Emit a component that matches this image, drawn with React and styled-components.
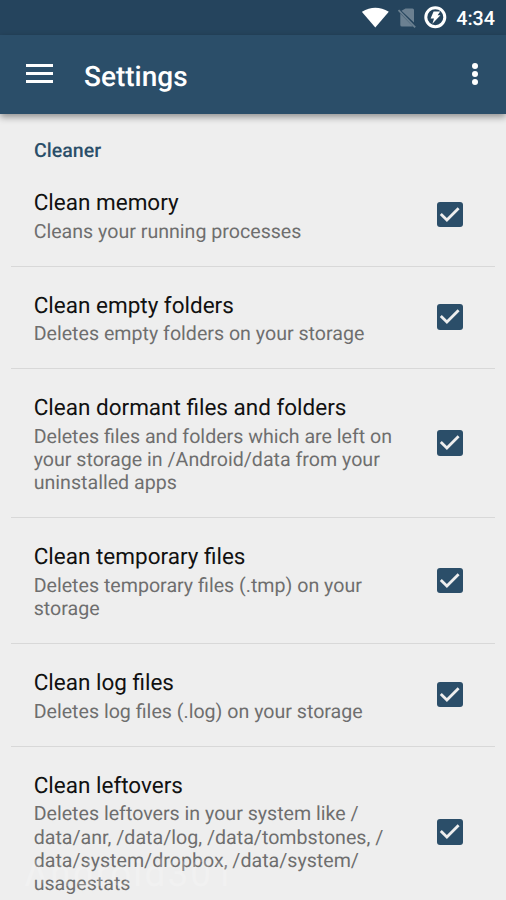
import styled, { createGlobalStyle } from "styled-components";

const GlobalStyle = createGlobalStyle`
    * {
        box-sizing: border-box;
    }
    body {
        margin: 0;
        background-color: #eeeeee;
        font-family: Roboto, "Liberation Sans", sans-serif;
        text-rendering: geometricPrecision;
        overflow: hidden;
    }
`
const Screen = styled.div`
    position: relative;
    display: flex;
    flex-direction: column;
    width: 506px;
    height: 900px;
    overflow: hidden;
    background-color: #eeeeee;
`
const StatusBar = styled.div`
    display: flex;
    flex-shrink: 0;
    justify-content: flex-end;
    align-items: center;
    height: 35px;
    padding-right: 11px;
    background-color: #25445d;
`
const Clock = styled.span`
    margin-left: 9px;
    color: #fff;
    font-size: 19.7px;
    font-weight: 500;
    line-height: 35px;
    padding-top: 2px;
`
const Toolbar = styled.header`
    display: flex;
    flex-shrink: 0;
    align-items: center;
    height: 79px;
    padding: 0 28px 0 26px;
    background-color: #2b4e69;
    box-shadow: 0 3px 7px rgba(0, 0, 0, 0.4);
`
const MenuIcon = styled.div`
    display: flex;
    flex-direction: column;
    gap: 5px;
    width: 27px;
    margin-bottom: 2px;
`
const MenuLine = styled.span`
    height: 3px;
    background-color: #fff;
`
const Title = styled.h1`
    flex: 1;
    margin: 3px 0 0 31px;
    color: #fff;
    font-size: 28px;
    font-weight: 500;
    line-height: 33px;
`
const MoreIcon = styled.div`
    display: flex;
    flex-direction: column;
    gap: 2.4px;
    margin-bottom: 1px;
`
const Dot = styled.span`
    width: 6px;
    height: 6px;
    border-radius: 50%;
    background-color: #fff;
`
const List = styled.main`
    padding: 0 11px;
`
const Category = styled.h2`
    height: 50px;
    margin: 0;
    padding: 25.4px 23px 0;
    color: #2b4e69;
    font-size: 19.6px;
    font-weight: 500;
    line-height: 23px;
`
const Row = styled.div`
    display: flex;
    justify-content: space-between;
    align-items: center;
    padding: 26px 32.5px 22.6px 22.7px;
    border-bottom: 1px solid #d8d8d8;

    &:last-child {
        border-bottom: none;
    }
`
const RowTitle = styled.div`
    color: #111;
    font-size: 22.5px;
    line-height: 26.4px;
`
const Summary = styled.div`
    padding-top: 3.4px;
    color: #6e6e6e;
    font-size: 19.62px;
    line-height: 23.2px;
    white-space: pre-line;
`
const Box = styled.div`
    display: flex;
    flex-shrink: 0;
    width: 25.5px;
    height: 25.5px;
    margin-bottom: 3.8px;
    border-radius: 3px;
    background-color: #2b4e69;
`
// Faint site mark over the bottom of the list
const Watermark = styled.div`
    position: absolute;
    left: 24px;
    bottom: 6px;
    color: rgba(255, 255, 255, 0.2);
    font-size: 37px;
    letter-spacing: 2.1px;
    line-height: 38px;
`

const settings = [
    { title: 'Clean memory', summary: 'Cleans your running processes' },
    { title: 'Clean empty folders', summary: 'Deletes empty folders on your storage' },
    {
        title: 'Clean dormant files and folders',
        summary: 'Deletes files and folders which are left on\nyour storage in /Android/data from your\nuninstalled apps',
    },
    { title: 'Clean temporary files', summary: 'Deletes temporary files (.tmp) on your\nstorage' },
    { title: 'Clean log files', summary: 'Deletes log files (.log) on your storage' },
    {
        title: 'Clean leftovers',
        summary: 'Deletes leftovers in your system like /\ndata/anr, /data/log, /data/tombstones, /\ndata/system/dropbox, /data/system/\nusagestats',
    },
];

function Checkbox() {
    return (
        <Box>
            <svg width="25" height="25" viewBox="0 0 25 25">
                <path d="M3.8 11.9L9.9 18L21.6 6.3" fill="none" stroke="#eeeeee" strokeWidth="2.8" />
            </svg>
        </Box>
    );
}

function StatusIcons() {
    return (
        <svg width="85" height="35" viewBox="362 0 85 35">
            <path d="M375.3 27.5L361.8 11.8Q375.3 3.5 388.8 11.8Z" fill="#fff" />
            <path d="M405.5 8.5H412.5Q414 8.5 414 10V22.5L401.5 10.8Z M400.3 13.5L413 26.6H402Q400.3 26.6 400.3 25Z" fill="#6b8091" />
            <path d="M398.5 10.2L415.2 27.3" stroke="#6b8091" strokeWidth="1.8" />
            <circle cx="435.3" cy="17.2" r="9.5" fill="none" stroke="#fff" strokeWidth="3" />
            <path d="M433.6 11.5H440.2L437.6 15.3H440.4L432.4 23.7L434 18.6H430.6Z" fill="#fff" />
        </svg>
    );
}

export default function App() {
    return (
        <Screen>
            <GlobalStyle />
            <StatusBar>
                <StatusIcons />
                <Clock>4:34</Clock>
            </StatusBar>
            <Toolbar>
                <MenuIcon>
                    <MenuLine />
                    <MenuLine />
                    <MenuLine />
                </MenuIcon>
                <Title>Settings</Title>
                <MoreIcon>
                    <Dot />
                    <Dot />
                    <Dot />
                </MoreIcon>
            </Toolbar>
            <List>
                <Category>Cleaner</Category>
                {settings.map((item) => (
                    <Row key={item.title}>
                        <div>
                            <RowTitle>{item.title}</RowTitle>
                            <Summary>{item.summary}</Summary>
                        </div>
                        <Checkbox />
                    </Row>
                ))}
            </List>
            <Watermark>Λndroid301</Watermark>
        </Screen>
    );
}
